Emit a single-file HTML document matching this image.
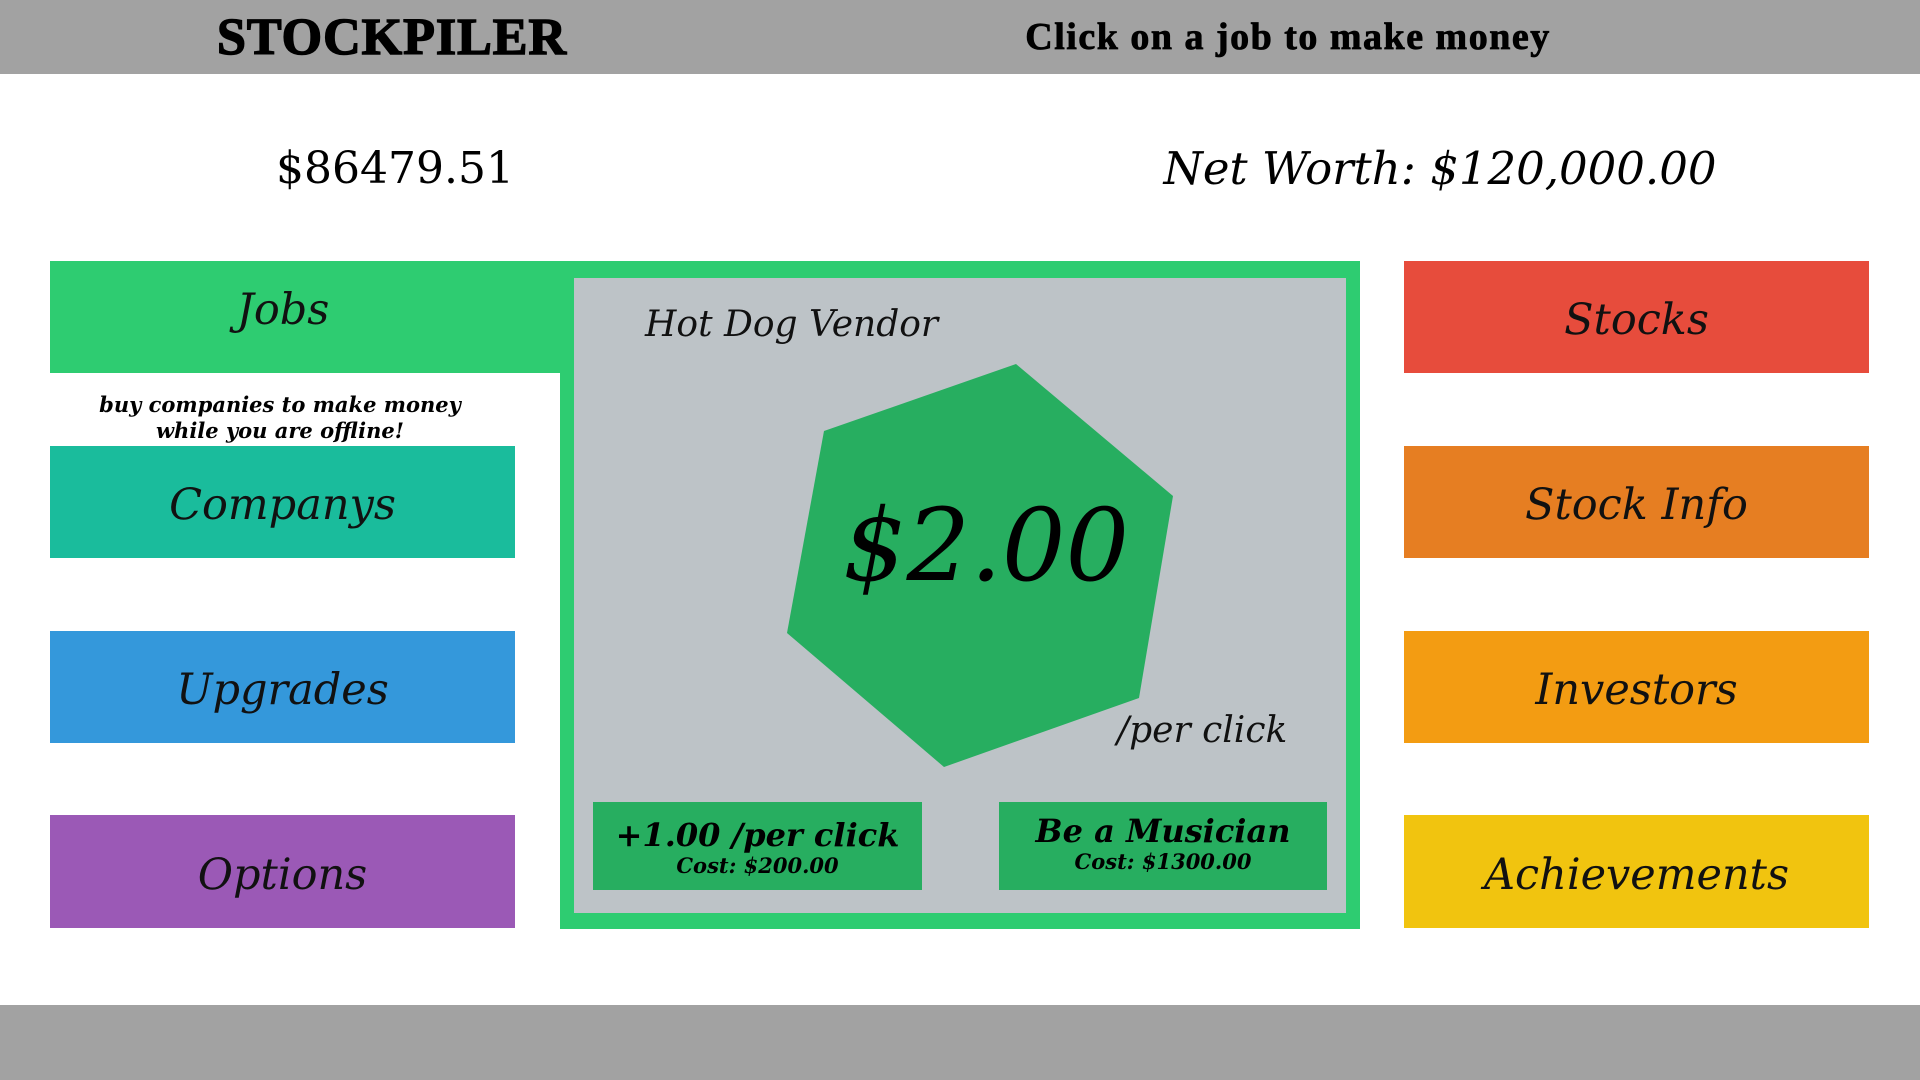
<!DOCTYPE html>
<html><head><meta charset="utf-8"><style>
*{margin:0;padding:0;box-sizing:border-box}
body{width:1920px;height:1080px;position:relative;background:#fff;font-family:Georgia,"DejaVu Serif","Liberation Serif",serif;overflow:hidden}
.a{position:absolute}
.c{display:flex;align-items:center;justify-content:center;text-align:center}
.i{font-style:italic}
.btn{font-style:italic;font-size:43px;color:#111;padding-top:6px}
</style></head><body>
<div class="a" style="left:0;top:0;width:1920px;height:74px;background:#a2a2a2"></div>
<div class="a c" style="left:192px;top:0;width:400px;height:74px;font-family:'Liberation Serif',serif;font-weight:900;font-size:52px;letter-spacing:1px;color:#000;-webkit-text-stroke:1.5px #000">STOCKPILER</div>
<div class="a c" style="left:960px;top:0;width:656px;height:74px;font-family:'Liberation Serif',serif;font-weight:900;font-size:38px;letter-spacing:1.5px;color:#000;-webkit-text-stroke:0.8px #000">Click on a job to make money</div>
<div class="a c" style="left:230px;top:138px;width:330px;height:60px;font-size:44px;color:#000">$86479.51</div>
<div class="a c i" style="left:1130px;top:138px;width:620px;height:60px;font-size:45px;color:#000">Net Worth: $120,000.00</div>

<div class="a c btn" style="left:50px;top:261px;width:510px;height:112px;background:#2ecc71;padding-right:44px;padding-top:0;padding-bottom:14px">Jobs</div>
<div class="a c i" style="left:80px;top:390px;width:400px;height:56px;font-size:21px;font-weight:bold;line-height:26px;color:#000">buy companies to make money<br>while you are offline!</div>
<div class="a c btn" style="left:50px;top:446px;width:465px;height:112px;background:#1abc9c">Companys</div>
<div class="a c btn" style="left:50px;top:631px;width:465px;height:112px;background:#3498db">Upgrades</div>
<div class="a c btn" style="left:50px;top:815px;width:465px;height:113px;background:#9b59b6">Options</div>

<div class="a" style="left:560px;top:261px;width:800px;height:668px;background:#2ecc71"></div>
<div class="a" style="left:574px;top:278px;width:772px;height:635px;background:#bdc3c7"></div>
<div class="a i" style="left:645px;top:304px;font-size:36px;color:#111">Hot Dog Vendor</div>
<svg class="a" style="left:0;top:0" width="1920" height="1080"><polygon points="1016,364 1173,496 1139,698 944,767 787,633 824,431" fill="#27ae60"/></svg>
<div class="a c i" style="left:786px;top:490px;width:400px;height:110px;font-size:100px;color:#000">$2.00</div>
<div class="a i" style="left:1117px;top:710px;font-size:36px;color:#111">/per click</div>
<div class="a c" style="left:593px;top:802px;width:329px;height:88px;background:#27ae60;flex-direction:column;font-style:italic;font-weight:bold;color:#000;padding-top:4px"><div style="font-size:32px;line-height:36px">+1.00 /per click</div><div style="font-size:21px;line-height:26px">Cost: $200.00</div></div>
<div class="a c" style="left:999px;top:802px;width:328px;height:88px;background:#27ae60;flex-direction:column;font-style:italic;font-weight:bold;color:#000;padding-bottom:4px"><div style="font-size:32px;line-height:36px">Be a Musician</div><div style="font-size:21px;line-height:26px">Cost: $1300.00</div></div>

<div class="a c btn" style="left:1404px;top:261px;width:465px;height:112px;background:#e74c3c">Stocks</div>
<div class="a c btn" style="left:1404px;top:446px;width:465px;height:112px;background:#e67e22">Stock Info</div>
<div class="a c btn" style="left:1404px;top:631px;width:465px;height:112px;background:#f39c12">Investors</div>
<div class="a c btn" style="left:1404px;top:815px;width:465px;height:113px;background:#f1c40f">Achievements</div>

<div class="a" style="left:0;top:1005px;width:1920px;height:75px;background:#a2a2a2"></div>
</body></html>
